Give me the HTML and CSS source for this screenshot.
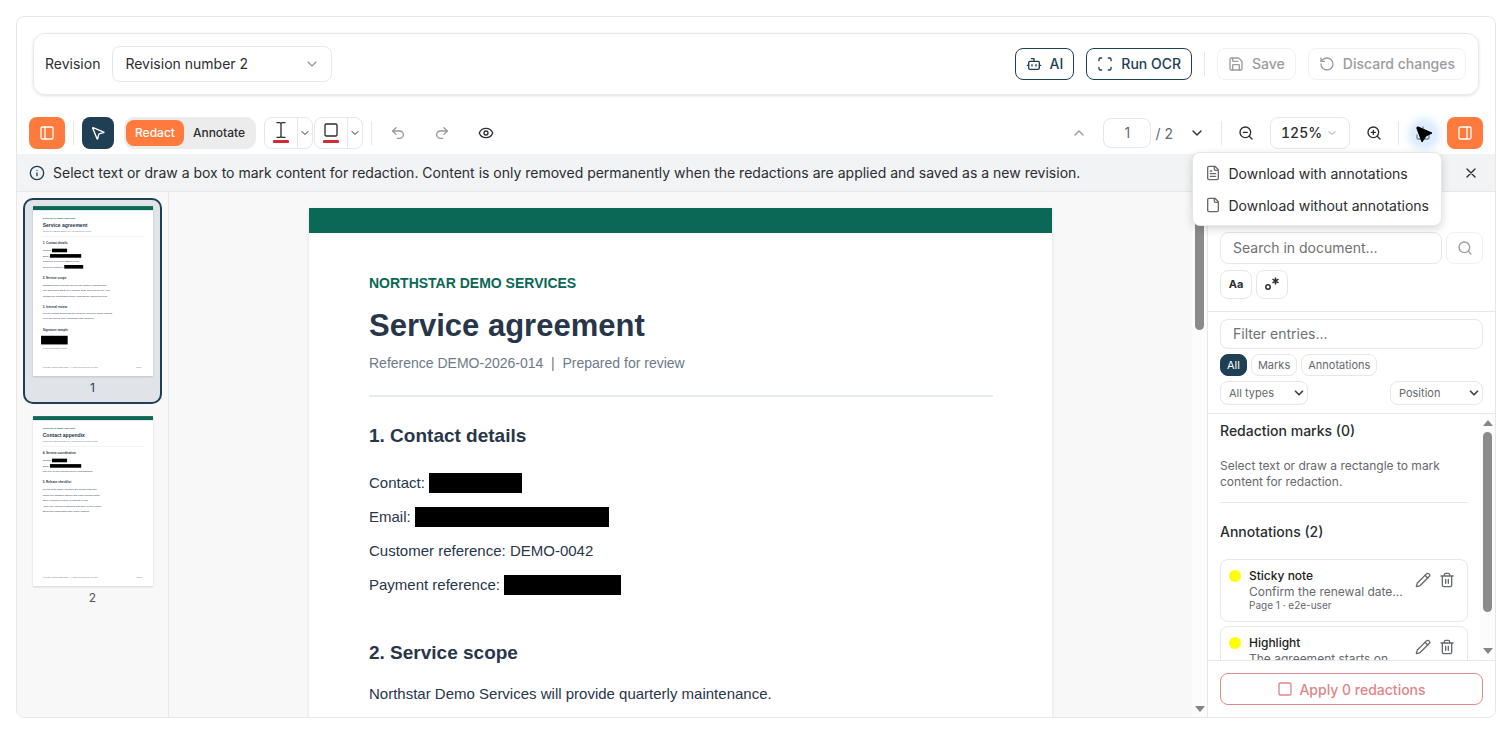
FILE: index.html
```html
<!DOCTYPE html>
<html lang="en">
<head>
<meta charset="utf-8">
<meta name="viewport" content="width=device-width, initial-scale=1">
<title>Document redaction</title>
<link rel="stylesheet" href="styles.css">
</head>
<body>
<svg class="defs" aria-hidden="true">
  <symbol id="chevron-down" viewBox="0 0 24 24"><path d="m6 9 6 6 6-6"/></symbol>
  <symbol id="chevron-up" viewBox="0 0 24 24"><path d="m18 15-6-6-6 6"/></symbol>
  <symbol id="bot" viewBox="0 0 24 24"><path d="M12 8V4H8"/><rect width="16" height="12" x="4" y="8" rx="2"/><path d="M2 14h2M20 14h2M15 13v2M9 13v2"/></symbol>
  <symbol id="scan" viewBox="0 0 24 24"><path d="M3 7V5a2 2 0 0 1 2-2h2M17 3h2a2 2 0 0 1 2 2v2M21 17v2a2 2 0 0 1-2 2h-2M7 21H5a2 2 0 0 1-2-2v-2"/></symbol>
  <symbol id="save" viewBox="0 0 24 24"><path d="M15.2 3a2 2 0 0 1 1.4.6l3.8 3.8a2 2 0 0 1 .6 1.4V19a2 2 0 0 1-2 2H5a2 2 0 0 1-2-2V5a2 2 0 0 1 2-2z"/><path d="M17 21v-7a1 1 0 0 0-1-1H8a1 1 0 0 0-1 1v7M7 3v4a1 1 0 0 0 1 1h7"/></symbol>
  <symbol id="rotate" viewBox="0 0 24 24"><path d="M3 12a9 9 0 1 0 9-9 9.75 9.75 0 0 0-6.74 2.74L3 8"/><path d="M3 3v5h5"/></symbol>
  <symbol id="panel-left" viewBox="0 0 24 24"><rect width="18" height="18" x="3" y="3" rx="2"/><path d="M9 3v18"/></symbol>
  <symbol id="panel-right" viewBox="0 0 24 24"><rect width="18" height="18" x="3" y="3" rx="2"/><path d="M15 3v18"/></symbol>
  <symbol id="pointer" viewBox="0 0 24 24"><path d="M4.037 4.688a.495.495 0 0 1 .651-.651l16 6.5a.5.5 0 0 1-.063.947l-6.124 1.58a2 2 0 0 0-1.438 1.435l-1.579 6.126a.5.5 0 0 1-.947.063z"/></symbol>
  <symbol id="undo" viewBox="0 0 24 24"><path d="M9 14 4 9l5-5"/><path d="M4 9h10.500a5.500 5.500 0 0 1 0 11H11"/></symbol>
  <symbol id="redo" viewBox="0 0 24 24"><path d="m15 14 5-5-5-5"/><path d="M20 9H9.500a5.500 5.500 0 0 0 0 11H13"/></symbol>
  <symbol id="eye" viewBox="0 0 24 24"><path d="M2.062 12.348a1 1 0 0 1 0-.696 10.750 10.750 0 0 1 19.876 0 1 1 0 0 1 0 .696 10.750 10.750 0 0 1-19.876 0"/><circle cx="12" cy="12" r="3"/></symbol>
  <symbol id="zoom-out" viewBox="0 0 24 24"><circle cx="11" cy="11" r="8"/><path d="m21 21-4.350-4.350M8 11h6"/></symbol>
  <symbol id="zoom-in" viewBox="0 0 24 24"><circle cx="11" cy="11" r="8"/><path d="m21 21-4.350-4.350M8 11h6M11 8v6"/></symbol>
  <symbol id="search" viewBox="0 0 24 24"><circle cx="11" cy="11" r="8"/><path d="m21 21-4.350-4.350"/></symbol>
  <symbol id="download" viewBox="0 0 24 24"><path d="M12 15V3M21 15v4a2 2 0 0 1-2 2H5a2 2 0 0 1-2-2v-4M7 10l5 5 5-5"/></symbol>
  <symbol id="info" viewBox="0 0 24 24"><circle cx="12" cy="12" r="10"/><path d="M12 16v-4M12 8h.01"/></symbol>
  <symbol id="close" viewBox="0 0 24 24"><path d="M18 6 6 18M6 6l12 12"/></symbol>
  <symbol id="file" viewBox="0 0 24 24"><path d="M15 2H6a2 2 0 0 0-2 2v16a2 2 0 0 0 2 2h12a2 2 0 0 0 2-2V7z"/><path d="M14 2v4a2 2 0 0 0 2 2h4"/></symbol>
  <symbol id="file-text" viewBox="0 0 24 24"><path d="M15 2H6a2 2 0 0 0-2 2v16a2 2 0 0 0 2 2h12a2 2 0 0 0 2-2V7z"/><path d="M14 2v4a2 2 0 0 0 2 2h4M10 9H8M16 13H8M16 17H8"/></symbol>
  <symbol id="pencil" viewBox="0 0 24 24"><path d="M21.174 6.812a1 1 0 0 0-3.986-3.987L3.842 16.174a2 2 0 0 0-.5.830l-1.321 4.352a.5.5 0 0 0 .623.622l4.353-1.320a2 2 0 0 0 .830-.497z"/><path d="m15 5 4 4"/></symbol>
  <symbol id="trash" viewBox="0 0 24 24"><path d="M3 6h18M19 6v14a2 2 0 0 1-2 2H7a2 2 0 0 1-2-2V6M8 6V4a2 2 0 0 1 2-2h4a2 2 0 0 1 2 2v2M10 11v6M14 11v6"/></symbol>
  <symbol id="square" viewBox="0 0 24 24"><rect width="18" height="18" x="3" y="3" rx="2"/></symbol>
  <symbol id="text-cursor" viewBox="0 0 24 24"><path d="M6 1h4a2 2 0 0 1 2 2 2 2 0 0 1 2-2h4M12 3v18M6 23h4a2 2 0 0 0 2-2 2 2 0 0 0 2 2h4"/></symbol>
  <symbol id="regex" viewBox="0 0 16 16"><circle cx="4" cy="11" r="2.200"/><path d="M11.500 1.500v7M8.500 3.200l6 3.600M14.500 3.200l-6 3.600"/></symbol>
</svg>

<main class="app">
  <header class="revision-bar">
    <label for="revision">Revision</label>
    <span class="select revision-select">
      <select id="revision"><option>Revision number 2</option></select>
      <svg class="icon"><use href="#chevron-down"/></svg>
    </span>
    <div class="actions">
      <button class="btn primary"><svg class="icon"><use href="#bot"/></svg>AI</button>
      <button class="btn primary"><svg class="icon"><use href="#scan"/></svg>Run OCR</button>
      <span class="sep"></span>
      <button class="btn" disabled><svg class="icon"><use href="#save"/></svg>Save</button>
      <button class="btn" disabled><svg class="icon"><use href="#rotate"/></svg>Discard changes</button>
    </div>
  </header>

  <div class="toolbar" role="toolbar" aria-label="Document tools">
    <div class="tools">
      <button class="tool accent" aria-label="Toggle pages"><svg class="icon"><use href="#panel-left"/></svg></button>
      <span class="sep"></span>
      <button class="tool navy" aria-label="Select"><svg class="icon"><use href="#pointer"/></svg></button>
      <div class="segmented">
        <button class="on">Redact</button>
        <button>Annotate</button>
      </div>
      <div class="split-group">
        <div class="split">
          <button class="split-main" aria-label="Mark text"><svg class="icon"><use href="#text-cursor"/></svg><span class="ink"></span></button>
          <button class="split-more" aria-label="Text mark options"><svg class="icon small"><use href="#chevron-down"/></svg></button>
        </div>
        <div class="split">
          <button class="split-main" aria-label="Mark area"><svg class="icon"><use href="#square"/></svg><span class="ink"></span></button>
          <button class="split-more" aria-label="Area mark options"><svg class="icon small"><use href="#chevron-down"/></svg></button>
        </div>
      </div>
      <span class="sep"></span>
      <button class="tool wide" aria-label="Undo" disabled><svg class="icon"><use href="#undo"/></svg></button>
      <button class="tool wide" aria-label="Redo" disabled><svg class="icon"><use href="#redo"/></svg></button>
      <button class="tool wide" aria-label="Preview"><svg class="icon"><use href="#eye"/></svg></button>
    </div>
    <div class="tools">
      <button class="tool" aria-label="Previous page" disabled><svg class="icon"><use href="#chevron-up"/></svg></button>
      <div class="pager"><input class="page-input" aria-label="Page" value="1"><span>/ 2</span></div>
      <button class="tool" aria-label="Next page"><svg class="icon"><use href="#chevron-down"/></svg></button>
      <span class="sep"></span>
      <button class="tool" aria-label="Zoom out"><svg class="icon"><use href="#zoom-out"/></svg></button>
      <span class="select zoom-select">
        <select aria-label="Zoom"><option>125%</option></select>
        <svg class="icon small"><use href="#chevron-down"/></svg>
      </span>
      <button class="tool" aria-label="Zoom in"><svg class="icon"><use href="#zoom-in"/></svg></button>
      <span class="sep"></span>
      <div class="download">
        <button class="tool" aria-label="Download"><svg class="icon"><use href="#download"/></svg></button>
        <svg class="cursor" viewBox="0 0 20 20" aria-hidden="true"><path d="M2 2 18 9 12 12 8 18Z"/></svg>
        <div class="menu" role="menu">
          <button role="menuitem"><svg class="icon"><use href="#file-text"/></svg>Download with annotations</button>
          <button role="menuitem"><svg class="icon"><use href="#file"/></svg>Download without annotations</button>
        </div>
      </div>
      <button class="tool accent" aria-label="Toggle sidebar"><svg class="icon"><use href="#panel-right"/></svg></button>
    </div>
  </div>

  <div class="notice">
    <svg class="icon"><use href="#info"/></svg>
    <p>Select text or draw a box to mark content for redaction. Content is only removed permanently when the redactions are applied and saved as a new revision.</p>
    <button class="close" aria-label="Dismiss"><svg class="icon"><use href="#close"/></svg></button>
  </div>

  <div class="workspace">
    <nav class="thumbs" aria-label="Pages">
      <button class="thumb current">
        <svg class="sheet" viewBox="0 0 595 842" aria-hidden="true">
          <rect class="band" width="595" height="20"/>
          <text class="t-brand" x="48" y="64">NORTHSTAR DEMO SERVICES</text>
          <text class="t-title" x="48" y="103">Service agreement</text>
          <text class="t-ref" x="48" y="128">Reference DEMO-2026-014  |  Prepared for review</text>
          <rect class="rule" x="48" y="149" width="499" height="2"/>
          <text class="t-head" x="48" y="187">1. Contact details</text>
          <text x="48" y="224">Contact:</text><rect x="94" y="211" width="75" height="18"/>
          <text x="48" y="251">Email:</text><rect x="84" y="238" width="155" height="18"/>
          <text x="48" y="278">Customer reference: DEMO-0042</text>
          <text x="48" y="305">Payment reference:</text><rect x="155" y="292" width="94" height="18"/>
          <text class="t-head" x="48" y="361">2. Service scope</text>
          <text x="48" y="394">Northstar Demo Services will provide quarterly maintenance.</text>
          <text x="48" y="422">The agreement starts on 1 October 2026 and runs for one year.</text>
          <text x="48" y="449">Contact the coordinator before replacing any shared devices.</text>
          <text class="t-head" x="48" y="503">3. Internal review</text>
          <text x="48" y="534">Review contact details and the payment reference before sharing.</text>
          <text x="48" y="562">Keep the source copy unchanged until approval.</text>
          <text class="t-label" x="48" y="617">Signature sample</text>
          <rect x="40" y="643" width="132" height="43"/>
          <text class="t-ref" x="48" y="708">Fictional signature image</text>
          <text class="t-foot" x="48" y="801">FICTIONAL DEMO DOCUMENT - All names and details are invented</text>
          <text class="t-foot" x="512" y="801">Page 1</text>
        </svg>
        <span>1</span>
      </button>
      <button class="thumb">
        <svg class="sheet" viewBox="0 0 595 842" aria-hidden="true">
          <rect class="band" width="595" height="20"/>
          <text class="t-brand" x="48" y="64">NORTHSTAR DEMO SERVICES</text>
          <text class="t-title" x="48" y="103">Contact appendix</text>
          <text class="t-ref" x="48" y="128">Reference DEMO-2026-014  |  Contact and release notes</text>
          <rect class="rule" x="48" y="149" width="499" height="2"/>
          <text class="t-head" x="48" y="187">4. Service coordination</text>
          <text x="48" y="224">Contact:</text><rect x="94" y="211" width="75" height="18"/>
          <text x="48" y="251">Email:</text><rect x="84" y="238" width="155" height="18"/>
          <text x="48" y="278">Use only for the fictional service demonstration.</text>
          <text class="t-head" x="48" y="332">5. Release checklist</text>
          <text x="48" y="368">Review both pages, including the contact appendix.</text>
          <text x="48" y="394">Check the signature sample and each repeated detail.</text>
          <text x="48" y="422">Save a working revision for internal review.</text>
          <text x="48" y="449">Apply only checked redactions and save a new version.</text>
          <text x="48" y="476">Export the downloaded PDF before sharing.</text>
          <text class="t-foot" x="48" y="801">FICTIONAL DEMO DOCUMENT - All names and details are invented</text>
          <text class="t-foot" x="512" y="801">Page 2</text>
        </svg>
        <span>2</span>
      </button>
    </nav>

    <section class="viewer" aria-label="Document">
      <div class="canvas">
        <article class="page">
          <p class="brand">NORTHSTAR DEMO SERVICES</p>
          <h1>Service agreement</h1>
          <p class="reference">Reference DEMO-2026-014 &nbsp;|&nbsp; Prepared for review</p>
          <h2>1. Contact details</h2>
          <p>Contact: <span class="redacted name"></span></p>
          <p>Email: <span class="redacted email"></span></p>
          <p>Customer reference: DEMO-0042</p>
          <p>Payment reference: <span class="redacted payment"></span></p>
          <h2 class="next">2. Service scope</h2>
          <p>Northstar Demo Services will provide quarterly maintenance.</p>
        </article>
      </div>
      <div class="scrollbar view-scroll"><span class="arrow up"></span><span class="handle"></span><span class="arrow down"></span></div>
    </section>

    <aside class="side">
      <div class="search">
        <div class="row">
          <input type="text" aria-label="Search in document" placeholder="Search in document...">
          <button class="btn go" aria-label="Search" disabled><svg class="icon"><use href="#search"/></svg></button>
        </div>
        <div class="row">
          <button class="toggle" aria-label="Match case">Aa</button>
          <button class="toggle" aria-label="Regular expression"><svg class="icon"><use href="#regex"/></svg></button>
        </div>
      </div>
      <div class="filters">
        <input type="text" aria-label="Filter entries" placeholder="Filter entries...">
        <div class="row">
          <button class="chip on">All</button>
          <button class="chip">Marks</button>
          <button class="chip">Annotations</button>
        </div>
        <div class="row spread">
          <span class="select mini types"><select aria-label="Type"><option>All types</option></select><svg class="icon"><use href="#chevron-down"/></svg></span>
          <span class="select mini"><select aria-label="Sort by"><option>Position</option></select><svg class="icon"><use href="#chevron-down"/></svg></span>
        </div>
      </div>
      <div class="entries">
        <div class="list">
          <h3>Redaction marks (0)</h3>
          <p class="empty">Select text or draw a rectangle to mark content for redaction.</p>
          <h3>Annotations (2)</h3>
          <div class="entry">
            <span class="dot"></span>
            <div class="entry-text"><strong>Sticky note</strong><p>Confirm the renewal date...</p><small>Page 1 · e2e-user</small></div>
            <button aria-label="Edit"><svg class="icon"><use href="#pencil"/></svg></button>
            <button aria-label="Delete"><svg class="icon"><use href="#trash"/></svg></button>
          </div>
          <div class="entry">
            <span class="dot"></span>
            <div class="entry-text"><strong>Highlight</strong><p>The agreement starts on</p><small>Page 1 · e2e-user</small></div>
            <button aria-label="Edit"><svg class="icon"><use href="#pencil"/></svg></button>
            <button aria-label="Delete"><svg class="icon"><use href="#trash"/></svg></button>
          </div>
        </div>
        <div class="scrollbar list-scroll"><span class="arrow up"></span><span class="handle"></span><span class="arrow down"></span></div>
      </div>
      <div class="apply">
        <button disabled><svg class="icon"><use href="#square"/></svg>Apply 0 redactions</button>
      </div>
    </aside>
  </div>
</main>
</body>
</html>
```
FILE: styles.css
```css
:root {
  --navy: #1e3f54;
  --accent: #ff7a3d;
  --line: #e6e7e9;
  --ink: #2b2d30;
  --muted: #66696d;
  --green: #0b6856;
}
* { box-sizing: border-box; }
body {
  margin: 0;
  padding: 16px;
  height: 100vh;
  background: #fff;
  color: var(--ink);
  font-family: Inter, "Liberation Sans", sans-serif;
  font-size: 14px;
}
button, input, select { font: inherit; color: inherit; }
button { border: 0; background: none; padding: 0; display: inline-flex; align-items: center; justify-content: center; }
p, h1, h2, h3 { margin: 0; }
.defs { position: absolute; width: 0; height: 0; }
.icon {
  width: 16px; height: 16px; flex: none;
  fill: none; stroke: currentColor; stroke-width: 2; stroke-linecap: round; stroke-linejoin: round;
}
.icon.small { width: 12px; height: 12px; }

.app {
  height: 100%;
  display: flex; flex-direction: column;
  border: 1px solid var(--line); border-radius: 8px;
  overflow: hidden;
}

/* Revision bar */
.revision-bar {
  display: flex; align-items: center; gap: 12px;
  margin: 16px; padding: 12px 12px 12px 11px;
  border: 1px solid var(--line); border-radius: 12px;
  box-shadow: 0 1px 3px rgba(0, 0, 0, .12);
}
.revision-bar label { padding-bottom: 2px; }
.select { position: relative; display: inline-flex; }
.select select {
  appearance: none; width: 100%;
  border: 1px solid var(--line); border-radius: 8px; background: #fff; outline: 0;
}
.select .icon { position: absolute; right: 12px; top: 50%; transform: translateY(-50%); color: #96999c; pointer-events: none; }
.revision-select { width: 220px; }
.revision-select select { height: 36px; padding: 0 12px 2px; }
.actions { margin-left: auto; display: flex; align-items: center; gap: 12px; }
.btn {
  height: 32px; padding: 0 10px 1px; gap: 8px;
  border: 1px solid var(--line); border-radius: 8px; background: #fff; font-weight: 500;
}
.btn.primary { border-color: var(--navy); color: var(--navy); }
.btn:disabled { color: #9b9c9e; border-color: #f1f1f2; }
.sep { width: 1px; height: 24px; background: var(--line); flex: none; }

/* Toolbar */
.toolbar { display: flex; justify-content: space-between; padding: 6px 12px 5px; }
.tools { display: flex; align-items: center; gap: 8px; height: 32px; }
.tool { width: 32px; height: 32px; border-radius: 8px; }
.tool.wide, .tool.accent { width: 36px; }
.tool.accent { background: var(--accent); color: #fff; }
.tool.navy { background: var(--navy); color: #fff; }
.tool:disabled { color: #97999b; }
.segmented { display: flex; margin-left: 2px; padding: 3px 2px; height: 32px; border-radius: 10px; background: #ececec; }
.segmented button { padding: 0 9px 1px; font-size: 12px; font-weight: 500; border-radius: 8px; }
.segmented .on { background: var(--accent); color: #fff; }
.split-group { display: flex; gap: 1px; }
.split { display: flex; height: 32px; border: 1px solid var(--line); border-radius: 8px; }
.split-main { width: 32px; padding-bottom: 1px; flex-direction: column; gap: 2px; }
.ink { width: 16px; height: 3px; border-radius: 1px; background: #d32b2f; }
.split-more { width: 15px; border-left: 1px solid var(--line); }
.pager { display: flex; align-items: center; gap: 4px; color: var(--muted); }
.page-input { width: 48px; height: 30px; padding: 0 0 1px; text-align: center; border: 1px solid var(--line); border-radius: 8px; outline: 0; }
.zoom-select { width: 80px; }
.zoom-select select { height: 32px; padding: 0 10px 2px; font-weight: 500; font-variant-numeric: tabular-nums; }
.download { position: relative; }
.cursor {
  position: absolute; left: 7px; top: 7px; width: 20px; height: 20px;
  fill: #000; stroke: #000; stroke-width: 1; stroke-linejoin: round;
  border-radius: 10px; background: rgba(190, 220, 255, .5); box-shadow: 0 0 8px 5px rgba(170, 210, 255, .5);
}
.menu {
  position: absolute; z-index: 2; right: -3px; top: 35px; padding: 4px;
  display: flex; flex-direction: column;
  background: #fff; border: 1px solid var(--line); border-radius: 8px; box-shadow: 0 3px 8px rgba(0, 0, 0, .16);
}
.menu button { height: 32px; padding: 0 8px; gap: 8px; justify-content: flex-start; white-space: nowrap; }
.menu .icon { color: var(--muted); }

.notice {
  display: flex; align-items: center; gap: 8px; min-height: 38px; padding: 0 12px;
  background: #f1f3f5; border-bottom: 1px solid var(--line); line-height: 20px;
}
.notice > .icon { color: var(--navy); }
.close { width: 24px; height: 24px; margin-left: auto; }

/* Workspace */
.workspace { flex: 1; min-height: 0; display: flex; }
.thumbs {
  width: 152px; flex: none; padding: 6px; display: flex; flex-direction: column; gap: 4px;
  background: #f8f8f8; border-right: 1px solid var(--line); overflow: hidden;
}
.thumb {
  flex: none; flex-direction: column; gap: 2px; padding: 6px 7px 4px;
  border: 2px solid transparent; border-radius: 10px; color: #555; font-size: 12px; line-height: 20px;
}
.thumb.current { border-color: var(--navy); background: #e0e4e9; color: var(--navy); }
.sheet {
  width: 120px; height: 170px; display: block; background: #fff; box-shadow: 0 1px 2px rgba(0, 0, 0, .15);
  font-family: "Liberation Sans", Arial, sans-serif; font-size: 12px;
}
.sheet text { fill: #28364a; }
.sheet .band { fill: var(--green); }
.sheet .rule { fill: #d9e5e3; }
.sheet .t-brand { font-size: 11px; font-weight: 700; fill: var(--green); }
.sheet .t-title { font-size: 25px; font-weight: 700; }
.sheet .t-ref { font-size: 11px; fill: #6d7a89; }
.sheet .t-head { font-size: 15px; font-weight: 700; }
.sheet .t-label { font-size: 15px; font-weight: 700; }
.sheet .t-foot { font-size: 9px; fill: #6d7a89; }

.viewer { flex: 1; min-width: 0; display: flex; background: #f8f8f8; }
.canvas { flex: 1; min-width: 0; padding: 16px; overflow: hidden; }
.page {
  max-width: 743px; min-height: 1052px; margin: 0 auto; padding: 38px 59px 38px 60px;
  background: #fff; border-top: 25px solid var(--green); box-shadow: 0 1px 3px rgba(0, 0, 0, .12);
  color: #28364a; font-family: "Liberation Sans", Arial, sans-serif; font-size: 15px; line-height: 34px;
}
.page .brand { font-size: 14px; font-weight: 700; line-height: 24px; color: var(--green); }
.page h1 { font-size: 31px; line-height: 36px; margin-top: 13px; }
.page .reference { padding-bottom: 20px; border-bottom: 2px solid #e3ecec; color: #6d7a89; font-size: 14px; line-height: 24px; margin-top: 7px; }
.page h2 { margin: 25px 0 16px; font-size: 19px; line-height: 28px; }
.page h2.next { margin: 37px 0 10px; }
.redacted { display: inline-block; height: 20px; background: #000; vertical-align: -5px; }
.name { width: 93px; }
.email { width: 194px; }
.payment { width: 117px; }

.scrollbar { width: 15px; flex: none; display: flex; flex-direction: column; align-items: center; background: #fcfcfc; padding: 5px 0; }
.handle { width: 9px; border-radius: 5px; background: #8b8b8b; }
.arrow { border: 5px solid transparent; }
.arrow.up { border-top: 0; border-bottom: 6px solid #858585; }
.arrow.down { border-bottom: 0; border-top: 6px solid #858585; margin-top: auto; }
.view-scroll .handle { height: 120px; margin-top: 7px; }
.list-scroll { padding-top: 6px; padding-bottom: 6px; }
.list-scroll .handle { height: 180px; margin-top: 6px; }

/* Sidebar */
.side { width: 288px; flex: none; display: flex; flex-direction: column; border-left: 1px solid var(--line); }
.side input { width: 100%; min-width: 0; height: 30px; padding: 0 12px 2px; border: 1px solid var(--line); border-radius: 8px; outline: 0; }
.side input::placeholder { color: #6f7173; opacity: 1; }
.row { display: flex; gap: 4px; }
.spread { justify-content: space-between; }
.search { padding: 40px 12px 12px; display: flex; flex-direction: column; gap: 6px; border-bottom: 1px solid var(--line); }
.side .search input { height: 32px; }
.go { width: 37px; flex: none; padding: 0; }
.toggle { width: 32px; height: 29px; padding-bottom: 1px; border: 1px solid var(--line); border-radius: 8px; font-size: 11px; font-weight: 700; }
.toggle .icon { stroke-width: 1.5; stroke-linecap: butt; }
.filters { padding: 7px 12px 8px; display: flex; flex-direction: column; gap: 5px; border-bottom: 1px solid var(--line); }
.chip { height: 22px; padding: 0 6px 1px; border: 1px solid var(--line); border-radius: 8px; font-size: 11px; color: var(--muted); }
.chip.on { background: var(--navy); border-color: var(--navy); color: #fff; }
.mini { width: 93px; }
.mini.types { width: 88px; }
.mini select { height: 24px; padding: 0 8px 1px; font-size: 11px; color: var(--muted); }
.mini .icon { width: 14px; height: 14px; right: 2px; color: #444; stroke-width: 3; }
.entries { flex: 1; min-height: 0; display: flex; }
.list { flex: 1; min-width: 0; padding: 7px 12px 0; overflow: hidden; }
.list h3 { font-size: 14px; font-weight: 500; line-height: 20px; }
.empty { margin: 17px 0 19px; padding-bottom: 12px; border-bottom: 1px solid var(--line); font-size: 12px; line-height: 16px; color: var(--muted); }
.entry { display: flex; align-items: flex-start; gap: 8px; height: 63px; padding: 8px 12px 8px 8px; margin-bottom: 4px; border: 1px solid var(--line); border-radius: 8px; }
.list h3 + .entry { margin-top: 17px; }
.dot { width: 12px; height: 12px; margin-top: 2px; flex: none; border-radius: 50%; background: #ff0; }
.entry-text { flex: 1; min-width: 0; font-size: 12px; line-height: 16px; color: var(--muted); }
.entry-text strong { display: block; font-weight: 500; color: #222; }
.entry-text p { white-space: nowrap; }
.entry-text small { display: block; font-size: 10px; line-height: 10px; }
.entry button { width: 16px; height: 24px; color: var(--muted); }
.apply { padding: 12px; border-top: 1px solid var(--line); }
.apply button { width: 100%; height: 32px; gap: 6px; border: 1px solid #e08b8e; border-radius: 8px; color: #df8588; font-weight: 500; }
```
